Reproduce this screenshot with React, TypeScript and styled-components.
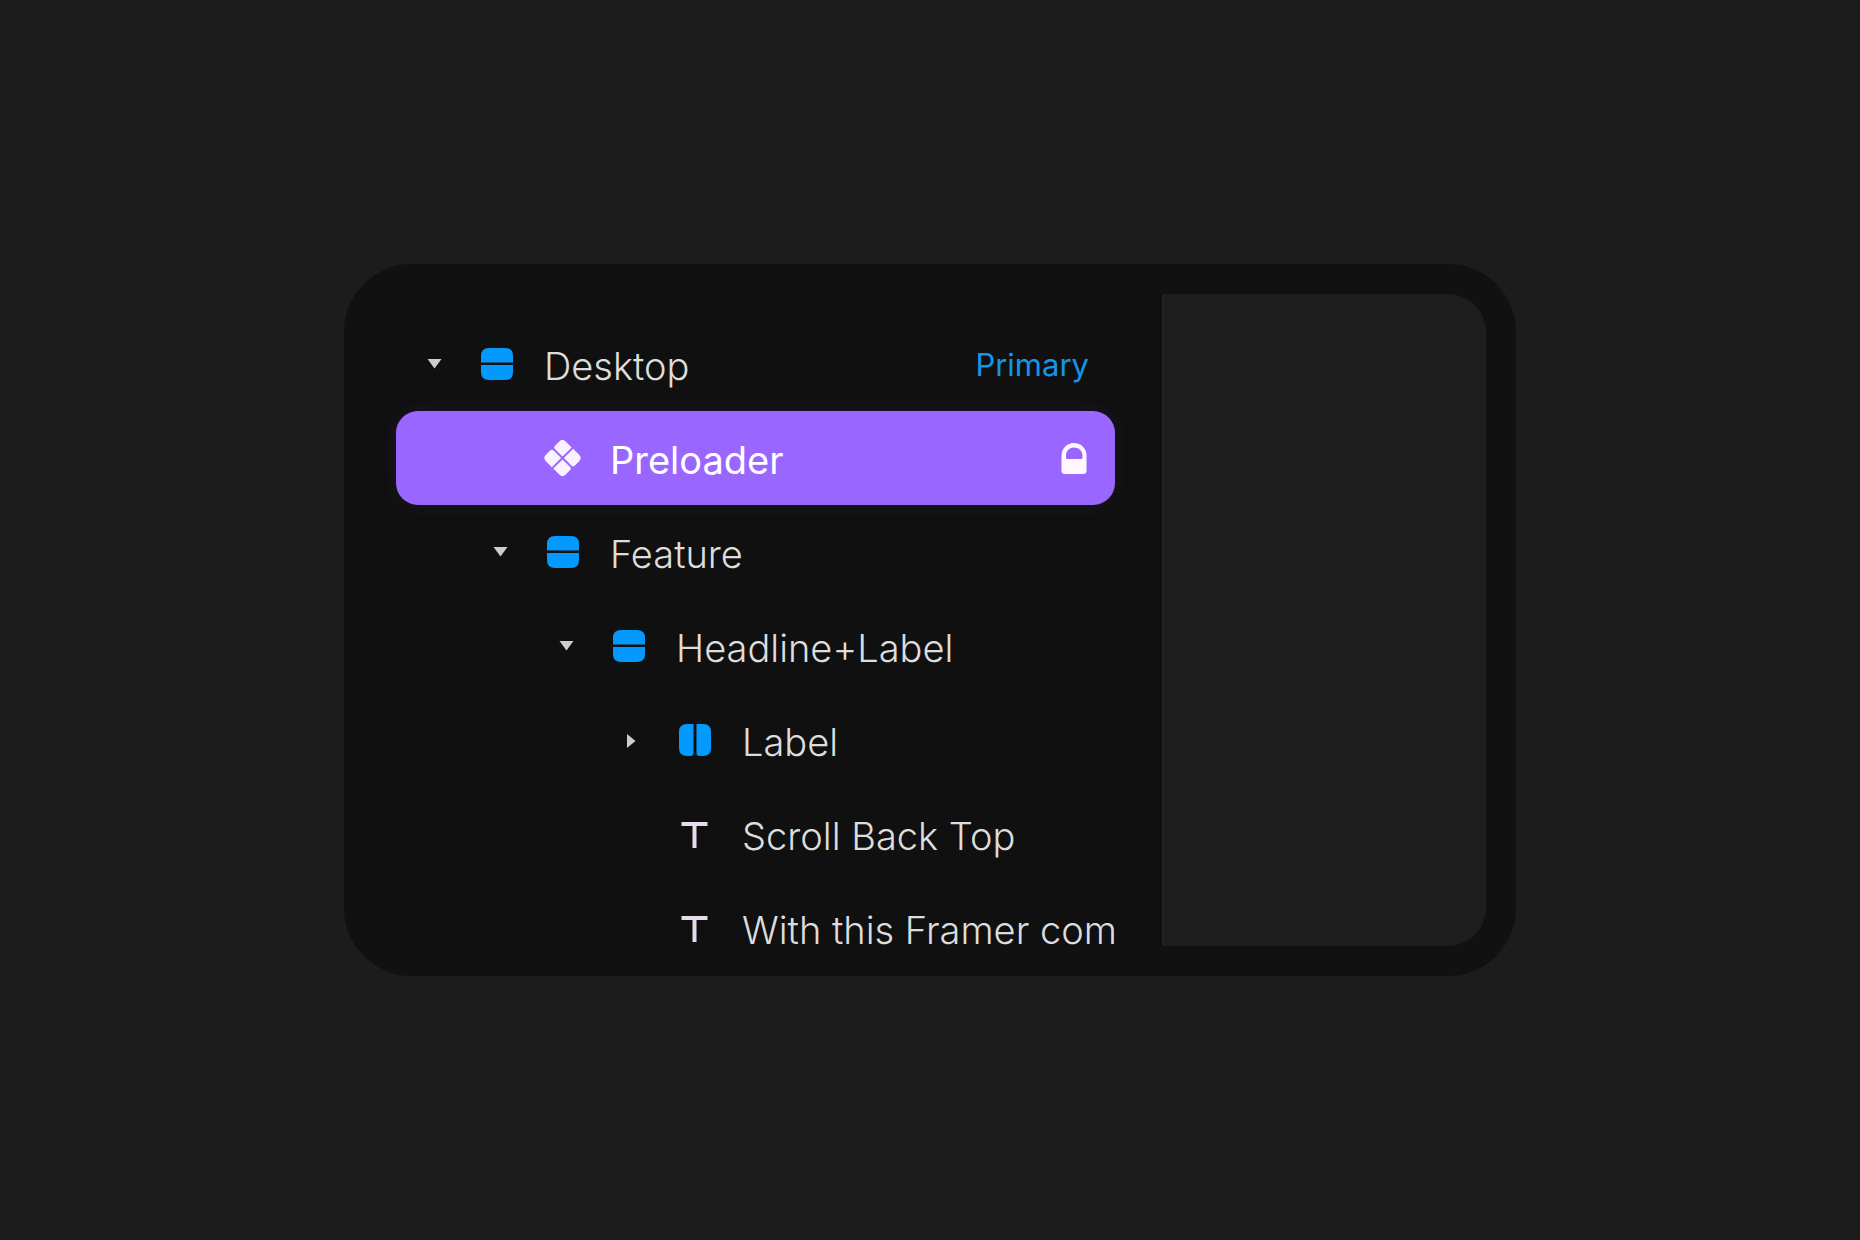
import React, { useState } from "react";
import styled, { createGlobalStyle, css } from "styled-components";

const GlobalStyle = createGlobalStyle`
  *, *::before, *::after { box-sizing: border-box; }
  body {
    margin: 0;
    background: #1c1c1c;
    font-family: Inter, "Liberation Sans", sans-serif;
  }
  button { font: inherit; color: inherit; }
`;

const Stage = styled.main`
  min-height: 100vh;
  padding: 24px;
  display: grid;
  place-items: center;
`;

const Card = styled.section`
  width: 100%;
  max-width: 1172px;
  padding: 30px;
  border-radius: 68px;
  background: #111111;
`;

const Screen = styled.div`
  display: grid;
  grid-template-columns: minmax(0, 788fr) minmax(0, 324fr);
  aspect-ratio: 1112 / 652;
  border-radius: 38px;
  overflow: hidden;
`;

const Sidebar = styled.nav`
  min-height: 0;
  padding: 23px 47px 0 22px;
  background: #101010;
  overflow: hidden;
`;

const Canvas = styled.div`
  background: #1e1e1e;
  border-left: 2px solid #222222;
`;

const Tree = styled.ul`
  list-style: none;
  margin: 0;
  padding: 0;
`;

const Row = styled.li<{ $depth: number; $selected: boolean }>`
  display: flex;
  align-items: center;
  gap: 28px;
  height: 94px;
  padding-left: ${({ $depth }) => 22 + $depth * 66}px;
  border-radius: 22px;
  color: #dddddd;
  font-weight: 300;
  ${({ $selected }) =>
    $selected &&
    css`
      color: #ffffff;
      font-weight: 400;
      background: #9966ff;
      box-shadow: 0 0 20px rgba(153, 102, 255, 0.08);
    `}
`;

const Toggle = styled.button`
  flex: none;
  display: grid;
  place-items: center;
  width: 32px;
  height: 32px;
  padding: 0;
  border: 0;
  background: none;
  cursor: pointer;
`;

const ToggleSpace = styled.span`
  flex: none;
  width: 32px;
`;

const Layer = styled.button`
  flex: 1;
  min-width: 0;
  display: flex;
  align-items: center;
  gap: 28px;
  height: 100%;
  padding: 0;
  border: 0;
  background: none;
  text-align: left;
  cursor: pointer;
`;

const IconBox = styled.span`
  flex: none;
  display: grid;
  place-items: center;
  width: 38px;
  height: 38px;
`;

const Name = styled.span`
  flex: 1;
  min-width: 0;
  padding-top: 4px;
  overflow: hidden;
  white-space: nowrap;
  font-size: 38px;
  line-height: 48px;
`;

const Tag = styled.span`
  flex: none;
  padding: 2px 26px 0 0;
  color: #1496e6;
  font-size: 31px;
  font-weight: 400;
  line-height: 40px;
`;

const LockBox = styled.span`
  flex: none;
  display: grid;
  padding-right: 28px;
`;

type Kind = "stack" | "columns" | "component" | "text";

function KindIcon({ kind }: { kind: Kind }) {
  if (kind === "stack") {
    return (
      <svg width="32" height="32" viewBox="0 0 32 32" fill="#0399ff" aria-hidden="true">
        <path d="M0 14.500V8Q0 0 8 0H24Q32 0 32 8V14.500Z" />
        <path d="M0 17H32V24Q32 32 24 32H8Q0 32 0 24Z" />
      </svg>
    );
  }
  if (kind === "columns") {
    return (
      <svg width="32" height="32" viewBox="0 0 32 32" fill="#0399ff" aria-hidden="true">
        <path d="M14.500 0V29Q14.500 32 11.500 32H8Q0 32 0 24V8Q0 0 8 0Z" />
        <path d="M17.500 0H24Q32 0 32 8V24Q32 32 24 32H20.500Q17.500 32 17.500 29Z" />
      </svg>
    );
  }
  if (kind === "component") {
    return (
      <svg width="38" height="38" viewBox="0 0 38 38" fill="#faf2ff" aria-hidden="true">
        <g transform="rotate(45 18.500 19)">
          <path d="M4.500 9.500Q4.500 5 9 5H17.500V18H7Q4.500 18 4.500 15.500Z" />
          <path d="M19.500 5H28Q32.500 5 32.500 9.500V15.500Q32.500 18 30 18H19.500Z" />
          <path d="M4.500 22.500Q4.500 20 7 20H17.500V33H9Q4.500 33 4.500 28.500Z" />
          <path d="M19.500 20H30Q32.500 20 32.500 22.500V28.500Q32.500 33 28 33H19.500Z" />
        </g>
      </svg>
    );
  }
  return (
    <svg width="28" height="32" viewBox="0 0 28 32" fill="#e6dcee" aria-hidden="true">
      <path d="M0.500 4H26.500V8H15.500V30H11.500V8H0.500Z" />
    </svg>
  );
}

function Caret({ open }: { open: boolean }) {
  return (
    <svg width="16" height="16" viewBox="0 0 16 16" fill="#cfcbd4" aria-hidden="true">
      <path d={open ? "M1.500 3H15.500L8.500 12.500Z" : "M3 2V16L11.500 9Z"} />
    </svg>
  );
}

function Lock() {
  return (
    <svg width="26" height="32" viewBox="0 0 26 32" role="img" aria-label="Locked">
      <path
        fill="#fff8ff"
        fillRule="evenodd"
        d="M13 1C20 1 25.500 6.500 25.500 13.500V28.500Q25.500 32 22 32H4Q0.500 32 0.500 28.500V13.500C0.500 6.500 6 1 13 1ZM13 5.500C8.500 5.500 5 9 5 13.500V15.500Q5 17 6.500 17H20Q21.500 17 21.500 15.500V13.500C21.500 9 17.500 5.500 13 5.500Z"
      />
    </svg>
  );
}

interface Item {
  id: string;
  name: string;
  kind: Kind;
  parents: string[];
  group?: boolean;
  tag?: string;
  locked?: boolean;
}

const items: Item[] = [
  { id: "desktop", name: "Desktop", kind: "stack", parents: [], group: true, tag: "Primary" },
  { id: "preloader", name: "Preloader", kind: "component", parents: ["desktop"], locked: true },
  { id: "feature", name: "Feature", kind: "stack", parents: ["desktop"], group: true },
  { id: "headline", name: "Headline+Label", kind: "stack", parents: ["desktop", "feature"], group: true },
  { id: "label", name: "Label", kind: "columns", parents: ["desktop", "feature", "headline"], group: true },
  { id: "scroll", name: "Scroll Back Top", kind: "text", parents: ["desktop", "feature", "headline"] },
  { id: "with", name: "With this Framer com", kind: "text", parents: ["desktop", "feature", "headline"] },
];

export default function App() {
  const [open, setOpen] = useState<string[]>(["desktop", "feature", "headline"]);
  const [selected, setSelected] = useState("preloader");

  const toggle = (id: string) =>
    setOpen((list) => (list.includes(id) ? list.filter((x) => x !== id) : [...list, id]));

  return (
    <>
      <GlobalStyle />
      <Stage>
        <Card>
          <Screen>
            <Sidebar aria-label="Layers">
              <Tree>
                {items
                  .filter((item) => item.parents.every((p) => open.includes(p)))
                  .map((item) => {
                    const isSelected = item.id === selected;
                    const isOpen = open.includes(item.id);
                    return (
                      <Row key={item.id} $depth={item.parents.length} $selected={isSelected}>
                        {item.group ? (
                          <Toggle
                            type="button"
                            aria-label={"Toggle " + item.name}
                            aria-expanded={isOpen}
                            onClick={() => toggle(item.id)}
                          >
                            <Caret open={isOpen} />
                          </Toggle>
                        ) : (
                          <ToggleSpace />
                        )}
                        <Layer type="button" aria-pressed={isSelected} onClick={() => setSelected(item.id)}>
                          <IconBox>
                            <KindIcon kind={item.kind} />
                          </IconBox>
                          <Name>{item.name}</Name>
                          {item.tag && <Tag>{item.tag}</Tag>}
                          {item.locked && (
                            <LockBox>
                              <Lock />
                            </LockBox>
                          )}
                        </Layer>
                      </Row>
                    );
                  })}
              </Tree>
            </Sidebar>
            <Canvas />
          </Screen>
        </Card>
      </Stage>
    </>
  );
}
